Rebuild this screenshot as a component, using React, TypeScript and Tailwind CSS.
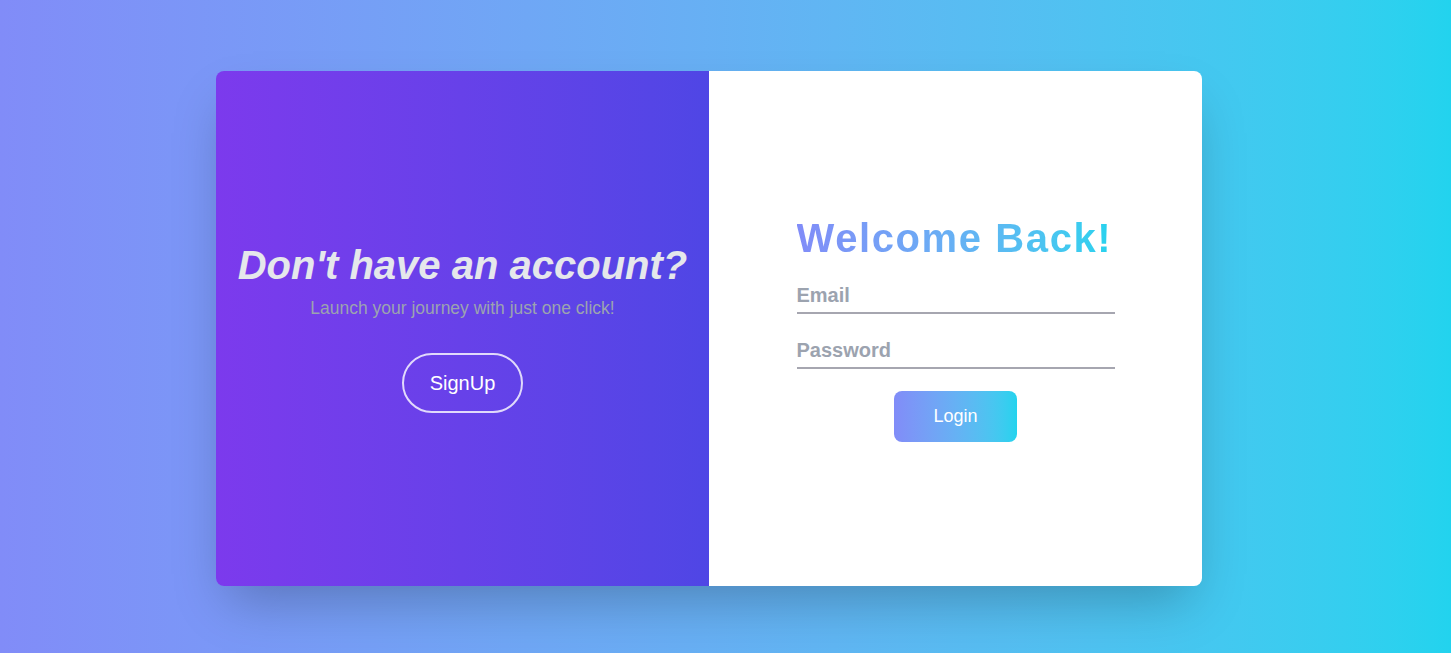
import React from 'react';

const App: React.FC = () => {
  return (
    <div
      className="min-h-screen w-full flex items-center justify-center pr-[33px] pt-[4px] bg-gradient-to-r from-[#818cf8] to-[#22d3ee]"
      style={{ fontFamily: '"Liberation Sans", Arial, sans-serif' }}
    >
      <div className="flex w-[986px] h-[515px] rounded-lg overflow-hidden shadow-2xl">
        {/* left: signup prompt */}
        <div className="w-1/2 flex flex-col items-center justify-center pb-[4px] bg-gradient-to-r from-[#7c3aed] to-[#4f46e5]">
          <h2 className="text-[40px] leading-[48px] font-bold italic text-[#e5e7eb]">Don't have an account?</h2>
          <p className="mt-[7px] text-[17.5px] leading-6 text-[#9ca3af]">Launch your journey with just one click!</p>
          <button className="mt-[33px] px-[26px] py-[14px] rounded-full border-2 border-white/80 text-[20px] leading-7 text-white">
            SignUp
          </button>
        </div>

        {/* right: login form */}
        <div className="w-1/2 bg-white flex items-center justify-center pb-[3px]">
          <form className="w-[318px] flex flex-col" onSubmit={e => e.preventDefault()}>
            <h1 className="whitespace-nowrap text-[40px] leading-[50px] font-bold tracking-[1.6px] bg-gradient-to-r from-[#818cf8] to-[#22d3ee] bg-clip-text text-transparent">
              Welcome Back!
            </h1>
            <input
              type="email"
              placeholder="Email"
              className="mt-[15px] w-full py-[3px] text-[20px] leading-7 font-bold border-b-2 border-[#a6a6b0] outline-none placeholder:text-[#9ca3af]"
            />
            <input
              type="password"
              placeholder="Password"
              className="mt-[19px] w-full py-[3px] text-[20px] leading-7 font-bold border-b-2 border-[#a6a6b0] outline-none placeholder:text-[#9ca3af]"
            />
            <button className="mt-[22px] self-center w-[123px] h-[51px] rounded-lg bg-gradient-to-r from-[#818cf8] to-[#22d3ee] text-white text-[18px]">
              Login
            </button>
          </form>
        </div>
      </div>
    </div>
  );
};

export default App;
